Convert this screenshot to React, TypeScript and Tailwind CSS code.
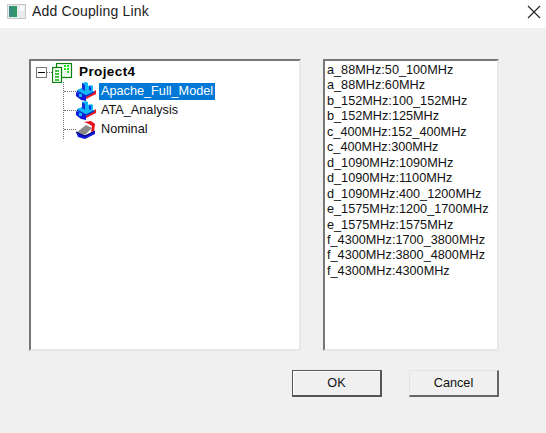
const items = [
  "a_88MHz:50_100MHz","a_88MHz:60MHz","b_152MHz:100_152MHz","b_152MHz:125MHz","c_400MHz:152_400MHz","c_400MHz:300MHz","d_1090MHz:1090MHz","d_1090MHz:1100MHz","d_1090MHz:400_1200MHz","e_1575MHz:1200_1700MHz","e_1575MHz:1575MHz","f_4300MHz:1700_3800MHz","f_4300MHz:3800_4800MHz","f_4300MHz:4300MHz",
];

function ModelIcon() {
  return (
    <svg width="20" height="19" viewBox="0 0 20 19" className="shrink-0">
      <path d="M8 18 L20 12 L20 8 L15 11 L8 14 Z" fill="#f0101c" />
      <path d="M1 8 L6 6 L6 1 L10 0 L12 1 L12 4 L15 3 L17 4 L17 9 L19 10 L10 15 L1 11 Z" fill="#10b8f8" />
      <path d="M6 1 L6 7 L9 9 L9 3 Z M13 4 L13 8 L15 9 L15 5 Z" fill="#1030d8" />
      <path d="M1 9 L10 14 L18 10" stroke="#0a20c0" strokeWidth="1.2" fill="none" />
      <path d="M10 14 L10 19 L5 18 L0 14 L0 10 Z" fill="#1018e0" />
      <rect x="3" y="12" width="3" height="3" fill="#10b8f8" />
    </svg>
  );
}

function NominalIcon() {
  return (
    <svg width="20" height="18" viewBox="0 0 20 18" className="shrink-0">
      <path d="M0 11 L9 15 L19 10 L19 13 L9 18 L2 16 Z" fill="#1018d8" />
      <path d="M1 11 L10 4 L16 7 L9 14 Z" fill="#8a8a8a" />
      <path d="M8 1 L15 0 L19 3 L18 10 L15 11 L16 5 L13 3 Z" fill="#e8101c" />
      <path d="M0 11 L9 15 L19 10" stroke="#000080" strokeWidth="1.2" fill="none" />
    </svg>
  );
}

function ProjectIcon() {
  return (
    <svg width="21" height="20" viewBox="0 0 21 20" className="shrink-0">
      <rect x="4.5" y="0.5" width="15" height="14" fill="#f4fff4" stroke="#0a800a" strokeWidth="1.2" />
      <rect x="0.5" y="4.5" width="9" height="15" fill="#f4fff4" stroke="#0a800a" strokeWidth="1.2" />
      <path d="M3 8h4M3 11h4M3 14h4M3 17h4" stroke="#10b010" strokeWidth="1.4" />
      <path d="M12 3h2M15 3h2M12 6h2M15 6h2M15 9h2" stroke="#20e020" strokeWidth="2" />
    </svg>
  );
}

function TreeRow({ children, label, selected }: { children: React.ReactNode; label: string; selected?: boolean }) {
  return (
    <div className="flex h-[19px] items-center">
      <span className="w-[12px] border-t border-dotted border-[#707070]" />
      {children}
      <span className={selected ? "ml-[3px] bg-[#0078d7] px-[2px] text-white leading-[17px]" : "ml-[3px] px-[2px] text-[#111] leading-[17px]"}>{label}</span>
    </div>
  );
}

export default function App() {
  return (
    <div className="flex h-[433px] w-[546px] flex-col overflow-hidden bg-[#f0f0f0] text-[12.7px] [font-family:'Liberation_Sans',Arial,sans-serif]">
      <div className="flex h-[28px] items-center bg-white pb-[5px] pl-[7px] pr-[4px]">
        <div className="flex h-[15px] w-[19px] border border-[#c8c8c8] bg-[#e8ecee] p-[1px]">
          <div className="h-full w-[9px] bg-gradient-to-r from-[#3a8a8a] to-[#2e9a5a]" />
          <div className="ml-[3px] h-[5px] w-[4px] bg-[#fafafa]" />
        </div>
        <span className="ml-[6px] text-[14px] tracking-[0.2px] text-[#222]">Add Coupling Link</span>
        <svg width="14" height="14" viewBox="0 0 14 14" className="ml-auto mr-[1px]">
          <path d="M1 1 L13 13 M13 1 L1 13" stroke="#222" strokeWidth="1.1" fill="none" />
        </svg>
      </div>

      <div className="flex flex-col pl-[29px] pt-[31px]">
        <div className="flex h-[292px] gap-[22px]">
          <div className="w-[272px] border-2 border-b-[#e8e8e8] border-l-[#777] border-r-[#e8e8e8] border-t-[#777] bg-white pl-[5px] pt-[2px]">
            <div className="flex h-[19px] items-center">
              <span className="flex h-[11px] w-[11px] items-center justify-center border border-[#777] bg-white">
                <span className="h-px w-[7px] bg-black" />
              </span>
              <span className="w-[5px] border-t border-dotted border-[#707070]" />
              <ProjectIcon />
              <span className="ml-[6px] text-[13.5px] font-bold tracking-[0.4px] text-black">Project4</span>
            </div>
            <div className="ml-[27px] w-fit border-l border-dotted border-[#707070]">
              <TreeRow label="Apache_Full_Model" selected><ModelIcon /></TreeRow>
              <TreeRow label="ATA_Analysis"><ModelIcon /></TreeRow>
              <TreeRow label="Nominal"><NominalIcon /></TreeRow>
            </div>
          </div>
          <div className="w-[176px] border-2 border-b-[#e8e8e8] border-l-[#777] border-r-[#e8e8e8] border-t-[#777] bg-white pl-[2px] pt-[2px]">
            {items.map((t) => (
              <div key={t} className="h-[15.46px] whitespace-nowrap leading-[15.46px] text-[#111]">{t}</div>
            ))}
          </div>
        </div>
        <div className="mt-[19px] flex gap-[27px] pl-[263px]">
          <button className="h-[27px] w-[90px] border border-[#555] border-b-2 border-r-2 bg-[#f0f0f0] pt-[2px] text-[12.7px] text-[#111] shadow-[inset_1px_1px_0_#fff]">OK</button>
          <button className="h-[27px] w-[90px] border border-b-2 border-r-2 border-b-[#666] border-l-[#e4e4e4] border-r-[#666] border-t-[#e4e4e4] bg-[#f0f0f0] pt-[2px] text-[12.7px] text-[#111]">Cancel</button>
        </div>
      </div>
    </div>
  );
}
